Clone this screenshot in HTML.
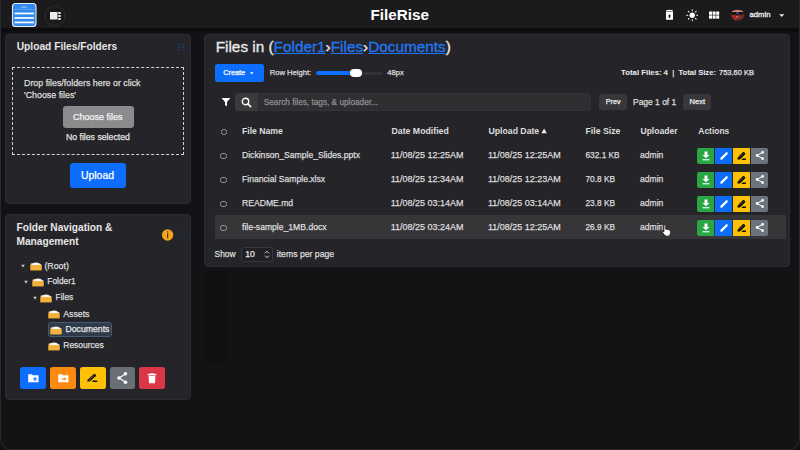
<!DOCTYPE html>
<html><head><meta charset="utf-8">
<style>
*{box-sizing:border-box;margin:0;padding:0}
html,body{width:800px;height:450px;overflow:hidden;background:#131215;font-family:"Liberation Sans",sans-serif;color:#e6e6e6;position:relative}
.a{position:absolute;white-space:nowrap}
.t{line-height:1;-webkit-text-stroke:0.25px currentColor}
.lk{color:#2176f0;text-decoration:underline;text-decoration-thickness:1px;text-underline-offset:1px}
#frame{position:absolute;left:0;top:0;width:800px;height:450px;border:1px solid #29282b;border-top:none;border-radius:0 0 12px 12px;pointer-events:none}
</style></head><body>
<div class="a" style="left:0px;top:0px;width:800px;height:28.3px;background:#1b1a1d;"></div>
<div class="a" style="left:0px;top:28.3px;width:800px;height:5.7px;background:linear-gradient(#0b0a0d 0%,#0c0b0e 45%,#161518 100%);"></div>
<svg class="a" style="left:11px;top:2px" width="27" height="26" viewBox="0 0 27 26">
<rect x="1.5" y="1.5" width="23.5" height="23" rx="3" fill="#3189ee" stroke="#e6ecf5" stroke-width="1.1"/>
<line x1="4" y1="7.3" x2="22.5" y2="7.3" stroke="#a8cbf5" stroke-width="0.7" stroke-dasharray="0.9 0.9"/>
<rect x="10" y="4.6" width="6" height="1" fill="#a8cbf5"/>
<rect x="3.5" y="10.6" width="19.5" height="1.7" fill="#fff"/>
<rect x="3.5" y="15.1" width="19.5" height="1.7" fill="#fff"/>
<rect x="3.5" y="19.6" width="19.5" height="1.7" fill="#fff"/>
</svg>
<svg class="a" style="left:44px;top:5px" width="22" height="22" viewBox="0 0 22 22">
<circle cx="11" cy="11" r="10" fill="#1a191c" stroke="#2e2d30" stroke-width="1"/>
<rect x="6" y="7" width="7.5" height="7.5" fill="#ececec"/>
<rect x="14.3" y="7" width="2.4" height="2" fill="#ececec"/>
<rect x="14.3" y="10" width="2.4" height="2" fill="#ececec"/>
<rect x="14.3" y="13" width="2.4" height="2" fill="#ececec"/>
</svg>
<div class="a t" style="left:370.50px;top:7.00px;font-size:15.26px;font-weight:bold;-webkit-text-stroke:0;color:#ffffff;">FileRise</div>
<svg class="a" style="left:664px;top:9px" width="11" height="12" viewBox="0 0 11 12">
<path d="M2.2 1.3 Q5.5 0.2 8.8 1.3 L9 2.4 H2 Z" fill="#fff"/>
<path d="M2 3 H9 V10.2 Q9 10.8 8.4 10.8 H2.6 Q2 10.8 2 10.2 Z" fill="#fff"/>
<path d="M5.5 5.2 L3.9 7.2 H4.8 V9 H6.2 V7.2 H7.1 Z" fill="#1b1a1d"/>
</svg>
<svg class="a" style="left:685.7px;top:9px" width="12.5" height="12.5" viewBox="0 0 16 16">
<circle cx="8" cy="8" r="3.4" fill="#fff"/>
<g stroke="#fff" stroke-width="1.3" stroke-linecap="round">
<line x1="8" y1="1" x2="8" y2="2.3"/><line x1="8" y1="13.7" x2="8" y2="15"/>
<line x1="1" y1="8" x2="2.3" y2="8"/><line x1="13.7" y1="8" x2="15" y2="8"/>
<line x1="3" y1="3" x2="3.9" y2="3.9"/><line x1="12.1" y1="12.1" x2="13" y2="13"/>
<line x1="3" y1="13" x2="3.9" y2="12.1"/><line x1="12.1" y1="3.9" x2="13" y2="3"/>
</g></svg>
<svg class="a" style="left:708px;top:11px" width="12" height="9" viewBox="0 0 12 9">
<g fill="#fff">
<rect x="1" y="0.5" width="3" height="3.3"/><rect x="4.6" y="0.5" width="3" height="3.3"/><rect x="8.2" y="0.5" width="3" height="3.3"/>
<rect x="1" y="4.4" width="3" height="3.3"/><rect x="4.6" y="4.4" width="3" height="3.3"/><rect x="8.2" y="4.4" width="3" height="3.3"/>
</g></svg>
<svg class="a" style="left:729.8px;top:9.3px" width="15" height="12" viewBox="0 0 16 13">
<ellipse cx="8" cy="6.5" rx="7.5" ry="6" fill="#6b2a22"/>
<path d="M2 2.5 Q8 -0.5 14 2.5 L14 3.5 H2 Z" fill="#c98a80"/>
<rect x="1.5" y="3.3" width="13" height="2.6" rx="1" fill="#111"/>
<rect x="6.5" y="3.5" width="3" height="1.8" fill="#2a4a8a"/>
<circle cx="4.5" cy="8" r="1.1" fill="#e02a2a"/><circle cx="10.5" cy="9" r="1.1" fill="#e02a2a"/>
<circle cx="7.5" cy="8.5" r="0.9" fill="#c9b0b0"/><circle cx="6" cy="10.5" r="1" fill="#e03a2a"/>
</svg>
<div class="a t" style="left:749.50px;top:11.00px;font-size:7.71px;color:#e8e8e8;-webkit-text-stroke:0.35px currentColor;">admin</div>
<svg class="a" style="left:778.8px;top:13.6px" width="5.5" height="3.2" viewBox="0 0 7 4"><path d="M0.3 0.3 H6.7 L3.5 3.7 Z" fill="#eee"/></svg>
<div class="a" style="left:5px;top:34px;width:186px;height:170px;background:#252428;border:1px solid #2c2b2f;border-radius:4px"></div>
<div class="a t" style="left:16.70px;top:42.00px;font-size:10.22px;font-weight:bold;-webkit-text-stroke:0;color:#e6e6e6;">Upload Files/Folders</div>
<svg class="a" style="left:177px;top:43px" width="8" height="8" viewBox="0 0 8 8"><g fill="#22395c">
<rect x="1" y="0.6" width="2.6" height="1.6"/><rect x="5" y="0.6" width="2.6" height="1.6"/>
<rect x="1" y="3.2" width="2.6" height="1.6"/><rect x="5" y="3.2" width="2.6" height="1.6"/>
<rect x="1" y="5.8" width="2.6" height="1.6"/><rect x="5" y="5.8" width="2.6" height="1.6"/></g></svg>
<div class="a" style="left:12px;top:67px;width:172px;height:88px;border:1.2px dashed #d4d4d4"></div>
<div class="a t" style="left:24.00px;top:79.00px;font-size:8.85px;color:#dddddd;">Drop files/folders here or click</div>
<div class="a t" style="left:24.00px;top:91.00px;font-size:8.85px;color:#dddddd;">'Choose files'</div>
<div class="a" style="left:62.5px;top:106.2px;width:71px;height:21.4px;background:#8b8a8d;border-radius:3px"></div>
<div class="a t" style="left:73.00px;top:113.00px;font-size:9.01px;color:#f4f4f4;">Choose files</div>
<div class="a t" style="left:65.90px;top:133.00px;font-size:8.72px;color:#e2e2e2;">No files selected</div>
<div class="a" style="left:69.5px;top:163px;width:56.7px;height:24.7px;background:#0d6efd;border-radius:3px"></div>
<div class="a t" style="left:81.00px;top:171.00px;font-size:10.41px;color:#ffffff;">Upload</div>
<div class="a" style="left:5px;top:214px;width:186px;height:185.5px;background:#252428;border:1px solid #2c2b2f;border-radius:4px"></div>
<div class="a t" style="left:16.50px;top:223.00px;font-size:10.16px;font-weight:bold;-webkit-text-stroke:0;color:#e6e6e6;">Folder Navigation &amp;</div>
<div class="a t" style="left:16.50px;top:237.00px;font-size:10.16px;font-weight:bold;-webkit-text-stroke:0;color:#e6e6e6;">Management</div>
<svg class="a" style="left:161px;top:229px" width="13" height="13" viewBox="0 0 13 13">
<circle cx="6.6" cy="6" r="5.7" fill="#f4a51f"/>
<rect x="6" y="2.2" width="1.2" height="1.3" fill="#5a3a10"/>
<rect x="6" y="4.3" width="1.2" height="5" fill="#5a3a10"/></svg>
<svg class="a" style="left:177px;top:231px" width="8" height="8" viewBox="0 0 8 8"><g fill="#1f2d40">
<rect x="1" y="0.6" width="2.6" height="1.4"/><rect x="5" y="0.6" width="2.6" height="1.4"/>
<rect x="1" y="3" width="2.6" height="1.4"/><rect x="5" y="3" width="2.6" height="1.4"/>
<rect x="1" y="5.4" width="2.6" height="1.4"/><rect x="5" y="5.4" width="2.6" height="1.4"/></g></svg>
<svg class="a" style="left:21.2px;top:263.8px" width="4" height="4" viewBox="0 0 4 4"><path d="M0.2 0.8 H3.8 L2 3.4 Z" fill="#d0d0d0"/></svg>
<svg class="a" style="left:29.9px;top:261.5px" width="12" height="9" viewBox="0 0 12 9">
<path d="M0.5 2.2 Q0.5 1.2 1.5 1.2 L4 1.2 L5 2 L10.5 2 Q11.5 2 11.5 3 L11.5 8.3 L0.5 8.3 Z" fill="#f2b13a"/>
<path d="M1.2 3.2 Q2 0.6 6 0.5 Q10 0.6 10.8 3.2 Z" fill="#f4f4f4"/>
<rect x="0.5" y="3.2" width="11" height="5.1" rx="0.6" fill="#f3b23b"/>
</svg>
<div class="a t" style="left:44.40px;top:262.00px;font-size:8.82px;color:#dedede;">(Root)</div>
<svg class="a" style="left:24.4px;top:279.6px" width="4" height="4" viewBox="0 0 4 4"><path d="M0.2 0.8 H3.8 L2 3.4 Z" fill="#d0d0d0"/></svg>
<svg class="a" style="left:32.4px;top:277.5px" width="12" height="9" viewBox="0 0 12 9">
<path d="M0.5 2.2 Q0.5 1.2 1.5 1.2 L4 1.2 L5 2 L10.5 2 Q11.5 2 11.5 3 L11.5 8.3 L0.5 8.3 Z" fill="#f2b13a"/>
<path d="M1.2 3.2 Q2 0.6 6 0.5 Q10 0.6 10.8 3.2 Z" fill="#f4f4f4"/>
<rect x="0.5" y="3.2" width="11" height="5.1" rx="0.6" fill="#f3b23b"/>
</svg>
<div class="a t" style="left:47.30px;top:277.00px;font-size:8.35px;color:#dedede;">Folder1</div>
<svg class="a" style="left:32.6px;top:295.6px" width="4" height="4" viewBox="0 0 4 4"><path d="M0.2 0.8 H3.8 L2 3.4 Z" fill="#d0d0d0"/></svg>
<svg class="a" style="left:40px;top:293.5px" width="12" height="9" viewBox="0 0 12 9">
<path d="M0.5 2.2 Q0.5 1.2 1.5 1.2 L4 1.2 L5 2 L10.5 2 Q11.5 2 11.5 3 L11.5 8.3 L0.5 8.3 Z" fill="#f2b13a"/>
<path d="M1.2 3.2 Q2 0.6 6 0.5 Q10 0.6 10.8 3.2 Z" fill="#f4f4f4"/>
<rect x="0.5" y="3.2" width="11" height="5.1" rx="0.6" fill="#f3b23b"/>
</svg>
<div class="a t" style="left:55.50px;top:293.00px;font-size:8.43px;color:#dedede;">Files</div>
<svg class="a" style="left:48.2px;top:309.6px" width="12" height="9" viewBox="0 0 12 9">
<path d="M0.5 2.2 Q0.5 1.2 1.5 1.2 L4 1.2 L5 2 L10.5 2 Q11.5 2 11.5 3 L11.5 8.3 L0.5 8.3 Z" fill="#f2b13a"/>
<path d="M1.2 3.2 Q2 0.6 6 0.5 Q10 0.6 10.8 3.2 Z" fill="#f4f4f4"/>
<rect x="0.5" y="3.2" width="11" height="5.1" rx="0.6" fill="#f3b23b"/>
</svg>
<div class="a t" style="left:63.30px;top:310.00px;font-size:8.73px;color:#dedede;">Assets</div>
<div class="a" style="left:47.6px;top:322px;width:64.4px;height:14.9px;background:#2f3a4a;border:1px solid #475a74;border-radius:3px"></div>
<svg class="a" style="left:50px;top:325.6px" width="12" height="9" viewBox="0 0 12 9">
<path d="M0.5 2.2 Q0.5 1.2 1.5 1.2 L4 1.2 L5 2 L10.5 2 Q11.5 2 11.5 3 L11.5 8.3 L0.5 8.3 Z" fill="#f2b13a"/>
<path d="M1.2 3.2 Q2 0.6 6 0.5 Q10 0.6 10.8 3.2 Z" fill="#f4f4f4"/>
<rect x="0.5" y="3.2" width="11" height="5.1" rx="0.6" fill="#f3b23b"/>
</svg>
<div class="a t" style="left:65.50px;top:325.00px;font-size:8.70px;color:#e8e8e8;">Documents</div>
<svg class="a" style="left:48.2px;top:341.6px" width="12" height="9" viewBox="0 0 12 9">
<path d="M0.5 2.2 Q0.5 1.2 1.5 1.2 L4 1.2 L5 2 L10.5 2 Q11.5 2 11.5 3 L11.5 8.3 L0.5 8.3 Z" fill="#f2b13a"/>
<path d="M1.2 3.2 Q2 0.6 6 0.5 Q10 0.6 10.8 3.2 Z" fill="#f4f4f4"/>
<rect x="0.5" y="3.2" width="11" height="5.1" rx="0.6" fill="#f3b23b"/>
</svg>
<div class="a t" style="left:63.30px;top:341.00px;font-size:8.47px;color:#dedede;">Resources</div>
<div class="a" style="left:20.4px;top:367.4px;width:25.6px;height:21.6px;background:#0d6efd;border-radius:2.8px"></div>
<div class="a" style="left:50px;top:367.4px;width:25.6px;height:21.6px;background:#fd8a10;border-radius:2.8px"></div>
<div class="a" style="left:80px;top:367.4px;width:25.6px;height:21.6px;background:#ffc107;border-radius:2.8px"></div>
<div class="a" style="left:109.6px;top:367.4px;width:25.6px;height:21.6px;background:#6a6e75;border-radius:2.8px"></div>
<div class="a" style="left:139.4px;top:367.4px;width:25.6px;height:21.6px;background:#dc3545;border-radius:2.8px"></div>
<svg class="a" style="left:28px;top:374.3px" width="11" height="8.5" viewBox="0 0 11 8.5">
<path d="M0.2 0.3 H3.8 L4.8 1.3 H10.5 V8.2 H0.2 Z" fill="#fff"/>
<circle cx="7" cy="5" r="1.7" fill="#0d6efd"/><path d="M6.3 5 H7.7 M7 4.3 V5.7" stroke="#fff" stroke-width="0.5"/></svg>
<svg class="a" style="left:57.7px;top:374.3px" width="11" height="8.5" viewBox="0 0 11 8.5">
<path d="M0.2 0.3 H3.8 L4.8 1.3 H10.5 V8.2 H0.2 Z" fill="#fff"/>
<path d="M6.3 3.2 L8.6 5 L6.3 6.8 Z" fill="#fd8a10"/><rect x="3.8" y="4.4" width="2.8" height="1.2" fill="#fd8a10"/></svg>
<svg class="a" style="left:86px;top:373px" width="12" height="10" viewBox="0 0 12 10">
<path d="M1.2 8.6 L1.8 6.6 L7.6 1.2 Q8.4 0.5 9.2 1.2 L9.6 1.6 Q10.3 2.4 9.6 3.2 L3.8 8.6 Z" fill="#111"/>
<path d="M3 7.2 L8 2.6" stroke="#c8950a" stroke-width="0.6"/>
<rect x="6.4" y="7.4" width="5" height="1.5" rx="0.5" fill="#111"/></svg>
<svg class="a" style="left:116px;top:371px" width="13" height="14" viewBox="0 0 13 14">
<g stroke="#fff" stroke-width="1.2"><line x1="3" y1="7" x2="9.5" y2="3"/><line x1="3" y1="7" x2="9.5" y2="11"/></g>
<circle cx="3" cy="7" r="1.8" fill="#fff"/><circle cx="9.5" cy="2.8" r="1.8" fill="#fff"/><circle cx="9.5" cy="11.2" r="1.8" fill="#fff"/></svg>
<svg class="a" style="left:146.5px;top:372.5px" width="10" height="11" viewBox="0 0 10 11">
<rect x="0.8" y="0.8" width="8.4" height="1.6" fill="#fff"/><rect x="3.5" y="0.2" width="3" height="1" fill="#fff"/>
<path d="M1.6 3 H8.4 L8 10.2 H2 Z" fill="#fff"/></svg>
<div class="a" style="left:204px;top:270.5px;width:23px;height:92px;background:#100f12;"></div>
<div class="a" style="left:204px;top:34px;width:586px;height:232.5px;background:#252428;border:1px solid #2c2b2f;border-radius:4px"></div>
<div class="a t" id="title" style="-webkit-text-stroke:0.35px currentColor;left:215.7px;top:39px;font-size:15.34px;color:#e8e8e8">Files in (<span class="lk">Folder1</span>›<span class="lk">Files</span>›<span class="lk">Documents</span>)</div>
<div class="a" style="left:214.7px;top:64px;width:49.3px;height:18px;background:#0d6efd;border-radius:2.5px"></div>
<div class="a t" style="left:223.20px;top:69.00px;font-size:7.33px;color:#ffffff;">Create</div>
<svg class="a" style="left:249.5px;top:72px" width="4" height="3" viewBox="0 0 4 3"><path d="M0 0.3 H3.6 L1.8 2.4 Z" fill="#fff"/></svg>
<div class="a t" style="left:269.70px;top:69.00px;font-size:7.64px;color:#dcdcdc;">Row Height:</div>
<div class="a" style="left:316.2px;top:71.5px;width:67px;height:3px;background:#323135;border-radius:2px"></div>
<div class="a" style="left:316.2px;top:71.1px;width:40px;height:3.8px;background:#0d6efd;border-radius:2px"></div>
<div class="a" style="left:349.8px;top:69.1px;width:12.1px;height:7.9px;background:#ffffff;border-radius:4px"></div>
<div class="a t" style="left:387.30px;top:69.00px;font-size:7.61px;color:#dcdcdc;">48px</div>
<div class="a t" style="left:621.00px;top:69.00px;font-size:7.80px;font-weight:bold;-webkit-text-stroke:0;color:#eeeeee;">Total Files:</div>
<div class="a t" style="left:663.60px;top:69.00px;font-size:8.00px;color:#e4e4e4;">4</div>
<div class="a t" style="left:672.20px;top:69.00px;font-size:8.00px;color:#e4e4e4;">|</div>
<div class="a t" style="left:678.40px;top:69.00px;font-size:7.63px;font-weight:bold;-webkit-text-stroke:0;color:#eeeeee;">Total Size:</div>
<div class="a t" style="left:719.00px;top:69.00px;font-size:7.49px;color:#e4e4e4;">753.60 KB</div>
<svg class="a" style="left:220.5px;top:97px" width="10" height="10" viewBox="0 0 10 10"><path d="M0.6 1 H9.4 L6 5 V9.2 L4 8 V5 Z" fill="#fff"/></svg>
<div class="a" style="left:235px;top:92.5px;width:355.5px;height:18.25px;background:#2f2e31;border-radius:3px;border:1px solid #333236"></div>
<div class="a" style="left:235px;top:92.5px;width:23px;height:18.25px;background:#3a393c;border-radius:3px 0 0 3px"></div>
<svg class="a" style="left:241px;top:96.5px" width="11" height="11" viewBox="0 0 11 11">
<circle cx="4.5" cy="4.5" r="3.2" fill="none" stroke="#fff" stroke-width="1.4"/>
<line x1="6.8" y1="6.8" x2="9.6" y2="9.6" stroke="#fff" stroke-width="1.6" stroke-linecap="round"/></svg>
<div class="a t" style="left:263.75px;top:99.00px;font-size:8.25px;color:#8e8d90;">Search files, tags, &amp; uploader...</div>
<div class="a" style="left:599.25px;top:93.75px;width:27.5px;height:16px;background:#38373b;border-radius:2px"></div>
<div class="a t" style="left:605.75px;top:99.00px;font-size:7.17px;color:#eeeeee;">Prev</div>
<div class="a t" style="left:633.00px;top:98.00px;font-size:8.46px;color:#dddddd;">Page 1 of 1</div>
<div class="a" style="left:683px;top:93.75px;width:28.25px;height:16px;background:#38373b;border-radius:2px"></div>
<div class="a t" style="left:689.50px;top:98.00px;font-size:7.54px;color:#eeeeee;">Next</div>
<div class="a" style="left:220.8px;top:128.8px;width:6.6px;height:6.6px;border:1.1px solid #9a9a9a;border-radius:2.6px"></div>
<div class="a t" style="left:242.00px;top:127.00px;font-size:8.64px;font-weight:bold;-webkit-text-stroke:0;color:#dedede;">File Name</div>
<div class="a t" style="left:391.50px;top:127.00px;font-size:8.74px;font-weight:bold;-webkit-text-stroke:0;color:#dedede;">Date Modified</div>
<div class="a t" style="left:488.50px;top:127.00px;font-size:8.70px;font-weight:bold;-webkit-text-stroke:0;color:#dedede;">Upload Date</div>
<svg class="a" style="left:540.8px;top:128.3px" width="6.5" height="5.8" viewBox="0 0 8 7"><path d="M0.5 6.3 L3.8 0.5 L7.2 6.3 Z" fill="#eee"/></svg>
<div class="a t" style="left:585.50px;top:127.00px;font-size:8.72px;font-weight:bold;-webkit-text-stroke:0;color:#dedede;">File Size</div>
<div class="a t" style="left:640.50px;top:127.00px;font-size:8.54px;font-weight:bold;-webkit-text-stroke:0;color:#dedede;">Uploader</div>
<div class="a t" style="left:698.30px;top:127.00px;font-size:8.45px;font-weight:bold;-webkit-text-stroke:0;color:#dedede;">Actions</div>
<div class="a" style="left:214.8px;top:215.2px;width:571.5px;height:24.2px;background:#363538;"></div>
<div class="a" style="left:220px;top:152.8px;width:6.6px;height:6.6px;border:1.1px solid #9a9a9a;border-radius:2.6px"></div>
<div class="a t" style="left:242.00px;top:151.00px;font-size:8.60px;color:#dcdcdc;">Dickinson_Sample_Slides.pptx</div>
<div class="a t" style="left:390.70px;top:151.00px;font-size:8.99px;color:#dcdcdc;">11/08/25 12:25AM</div>
<div class="a t" style="left:488.00px;top:151.00px;font-size:8.99px;color:#dcdcdc;">11/08/25 12:25AM</div>
<div class="a t" style="left:585.50px;top:151.00px;font-size:8.30px;color:#dcdcdc;">632.1 KB</div>
<div class="a t" style="left:640.00px;top:151.00px;font-size:8.56px;color:#dcdcdc;">admin</div>
<div class="a" style="left:696.9px;top:147.9px;width:17.6px;height:16.2px;background:#28a745;border-radius:2px 0 0 2px"></div>
<div class="a" style="left:714.8px;top:147.9px;width:17.6px;height:16.2px;background:#0d6efd;"></div>
<div class="a" style="left:732.9px;top:147.9px;width:17.6px;height:16.2px;background:#ffc107;"></div>
<div class="a" style="left:750.8px;top:147.9px;width:17.2px;height:16.2px;background:#6c757d;border-radius:0 2px 2px 0"></div>
<svg class="a" style="left:700.5px;top:150.9px" width="10" height="10" viewBox="0 0 10 10">
<path d="M3.5 0.5 H6.5 V4 H8.5 L5 7.3 L1.5 4 H3.5 Z" fill="#fff"/><rect x="1.5" y="8.2" width="7" height="1.1" fill="#fff"/></svg>
<svg class="a" style="left:718.5px;top:150.9px" width="10" height="10" viewBox="0 0 10 10">
<path d="M1.2 8.8 L1.6 6.8 L7 1.4 Q7.6 0.8 8.2 1.4 L8.6 1.8 Q9.2 2.4 8.6 3 L3.2 8.4 Z" fill="#fff"/></svg>
<svg class="a" style="left:735.5px;top:150.9px" width="11" height="10" viewBox="0 0 11 10">
<path d="M1.3 8.6 L1.8 6.2 L6.8 1.2 Q7.5 0.5 8.2 1.2 L9 2 Q9.7 2.7 9 3.4 L4 8.4 Z" fill="#111"/>
<path d="M2.8 6.8 L7.3 2.3" stroke="#8a6a10" stroke-width="0.5"/>
<rect x="6" y="7.6" width="4" height="1.4" rx="0.5" fill="#111"/></svg>
<svg class="a" style="left:754.5px;top:150.4px" width="10" height="11" viewBox="0 0 10 11">
<g stroke="#fff" stroke-width="1"><line x1="2.2" y1="5.5" x2="7.6" y2="2.2"/><line x1="2.2" y1="5.5" x2="7.6" y2="8.8"/></g>
<circle cx="2.2" cy="5.5" r="1.4" fill="#fff"/><circle cx="7.6" cy="2.4" r="1.35" fill="#fff"/><circle cx="7.6" cy="8.6" r="1.35" fill="#fff"/></svg>
<div class="a" style="left:220px;top:176.8px;width:6.6px;height:6.6px;border:1.1px solid #9a9a9a;border-radius:2.6px"></div>
<div class="a t" style="left:242.00px;top:175.00px;font-size:8.60px;color:#dcdcdc;">Financial Sample.xlsx</div>
<div class="a t" style="left:390.70px;top:175.00px;font-size:8.99px;color:#dcdcdc;">11/08/25 12:34AM</div>
<div class="a t" style="left:488.00px;top:175.00px;font-size:8.99px;color:#dcdcdc;">11/08/25 12:23AM</div>
<div class="a t" style="left:585.50px;top:175.00px;font-size:8.30px;color:#dcdcdc;">70.8 KB</div>
<div class="a t" style="left:640.00px;top:175.00px;font-size:8.56px;color:#dcdcdc;">admin</div>
<div class="a" style="left:696.9px;top:171.9px;width:17.6px;height:16.2px;background:#28a745;border-radius:2px 0 0 2px"></div>
<div class="a" style="left:714.8px;top:171.9px;width:17.6px;height:16.2px;background:#0d6efd;"></div>
<div class="a" style="left:732.9px;top:171.9px;width:17.6px;height:16.2px;background:#ffc107;"></div>
<div class="a" style="left:750.8px;top:171.9px;width:17.2px;height:16.2px;background:#6c757d;border-radius:0 2px 2px 0"></div>
<svg class="a" style="left:700.5px;top:174.9px" width="10" height="10" viewBox="0 0 10 10">
<path d="M3.5 0.5 H6.5 V4 H8.5 L5 7.3 L1.5 4 H3.5 Z" fill="#fff"/><rect x="1.5" y="8.2" width="7" height="1.1" fill="#fff"/></svg>
<svg class="a" style="left:718.5px;top:174.9px" width="10" height="10" viewBox="0 0 10 10">
<path d="M1.2 8.8 L1.6 6.8 L7 1.4 Q7.6 0.8 8.2 1.4 L8.6 1.8 Q9.2 2.4 8.6 3 L3.2 8.4 Z" fill="#fff"/></svg>
<svg class="a" style="left:735.5px;top:174.9px" width="11" height="10" viewBox="0 0 11 10">
<path d="M1.3 8.6 L1.8 6.2 L6.8 1.2 Q7.5 0.5 8.2 1.2 L9 2 Q9.7 2.7 9 3.4 L4 8.4 Z" fill="#111"/>
<path d="M2.8 6.8 L7.3 2.3" stroke="#8a6a10" stroke-width="0.5"/>
<rect x="6" y="7.6" width="4" height="1.4" rx="0.5" fill="#111"/></svg>
<svg class="a" style="left:754.5px;top:174.4px" width="10" height="11" viewBox="0 0 10 11">
<g stroke="#fff" stroke-width="1"><line x1="2.2" y1="5.5" x2="7.6" y2="2.2"/><line x1="2.2" y1="5.5" x2="7.6" y2="8.8"/></g>
<circle cx="2.2" cy="5.5" r="1.4" fill="#fff"/><circle cx="7.6" cy="2.4" r="1.35" fill="#fff"/><circle cx="7.6" cy="8.6" r="1.35" fill="#fff"/></svg>
<div class="a" style="left:220px;top:200.8px;width:6.6px;height:6.6px;border:1.1px solid #9a9a9a;border-radius:2.6px"></div>
<div class="a t" style="left:242.00px;top:199.00px;font-size:8.60px;color:#dcdcdc;">README.md</div>
<div class="a t" style="left:390.70px;top:199.00px;font-size:8.99px;color:#dcdcdc;">11/08/25 03:14AM</div>
<div class="a t" style="left:488.00px;top:199.00px;font-size:8.99px;color:#dcdcdc;">11/08/25 03:14AM</div>
<div class="a t" style="left:585.50px;top:199.00px;font-size:8.30px;color:#dcdcdc;">23.8 KB</div>
<div class="a t" style="left:640.00px;top:199.00px;font-size:8.56px;color:#dcdcdc;">admin</div>
<div class="a" style="left:696.9px;top:195.9px;width:17.6px;height:16.2px;background:#28a745;border-radius:2px 0 0 2px"></div>
<div class="a" style="left:714.8px;top:195.9px;width:17.6px;height:16.2px;background:#0d6efd;"></div>
<div class="a" style="left:732.9px;top:195.9px;width:17.6px;height:16.2px;background:#ffc107;"></div>
<div class="a" style="left:750.8px;top:195.9px;width:17.2px;height:16.2px;background:#6c757d;border-radius:0 2px 2px 0"></div>
<svg class="a" style="left:700.5px;top:198.9px" width="10" height="10" viewBox="0 0 10 10">
<path d="M3.5 0.5 H6.5 V4 H8.5 L5 7.3 L1.5 4 H3.5 Z" fill="#fff"/><rect x="1.5" y="8.2" width="7" height="1.1" fill="#fff"/></svg>
<svg class="a" style="left:718.5px;top:198.9px" width="10" height="10" viewBox="0 0 10 10">
<path d="M1.2 8.8 L1.6 6.8 L7 1.4 Q7.6 0.8 8.2 1.4 L8.6 1.8 Q9.2 2.4 8.6 3 L3.2 8.4 Z" fill="#fff"/></svg>
<svg class="a" style="left:735.5px;top:198.9px" width="11" height="10" viewBox="0 0 11 10">
<path d="M1.3 8.6 L1.8 6.2 L6.8 1.2 Q7.5 0.5 8.2 1.2 L9 2 Q9.7 2.7 9 3.4 L4 8.4 Z" fill="#111"/>
<path d="M2.8 6.8 L7.3 2.3" stroke="#8a6a10" stroke-width="0.5"/>
<rect x="6" y="7.6" width="4" height="1.4" rx="0.5" fill="#111"/></svg>
<svg class="a" style="left:754.5px;top:198.4px" width="10" height="11" viewBox="0 0 10 11">
<g stroke="#fff" stroke-width="1"><line x1="2.2" y1="5.5" x2="7.6" y2="2.2"/><line x1="2.2" y1="5.5" x2="7.6" y2="8.8"/></g>
<circle cx="2.2" cy="5.5" r="1.4" fill="#fff"/><circle cx="7.6" cy="2.4" r="1.35" fill="#fff"/><circle cx="7.6" cy="8.6" r="1.35" fill="#fff"/></svg>
<div class="a" style="left:220px;top:224.8px;width:6.6px;height:6.6px;border:1.1px solid #9a9a9a;border-radius:2.6px"></div>
<div class="a t" style="left:242.00px;top:223.00px;font-size:8.60px;color:#dcdcdc;">file-sample_1MB.docx</div>
<div class="a t" style="left:390.70px;top:223.00px;font-size:8.99px;color:#dcdcdc;">11/08/25 03:24AM</div>
<div class="a t" style="left:488.00px;top:223.00px;font-size:8.99px;color:#dcdcdc;">11/08/25 12:25AM</div>
<div class="a t" style="left:585.50px;top:223.00px;font-size:8.30px;color:#dcdcdc;">26.9 KB</div>
<div class="a t" style="left:640.00px;top:223.00px;font-size:8.56px;color:#dcdcdc;">admin</div>
<div class="a" style="left:696.9px;top:219.9px;width:17.6px;height:16.2px;background:#28a745;border-radius:2px 0 0 2px"></div>
<div class="a" style="left:714.8px;top:219.9px;width:17.6px;height:16.2px;background:#0d6efd;"></div>
<div class="a" style="left:732.9px;top:219.9px;width:17.6px;height:16.2px;background:#ffc107;"></div>
<div class="a" style="left:750.8px;top:219.9px;width:17.2px;height:16.2px;background:#6c757d;border-radius:0 2px 2px 0"></div>
<svg class="a" style="left:700.5px;top:222.9px" width="10" height="10" viewBox="0 0 10 10">
<path d="M3.5 0.5 H6.5 V4 H8.5 L5 7.3 L1.5 4 H3.5 Z" fill="#fff"/><rect x="1.5" y="8.2" width="7" height="1.1" fill="#fff"/></svg>
<svg class="a" style="left:718.5px;top:222.9px" width="10" height="10" viewBox="0 0 10 10">
<path d="M1.2 8.8 L1.6 6.8 L7 1.4 Q7.6 0.8 8.2 1.4 L8.6 1.8 Q9.2 2.4 8.6 3 L3.2 8.4 Z" fill="#fff"/></svg>
<svg class="a" style="left:735.5px;top:222.9px" width="11" height="10" viewBox="0 0 11 10">
<path d="M1.3 8.6 L1.8 6.2 L6.8 1.2 Q7.5 0.5 8.2 1.2 L9 2 Q9.7 2.7 9 3.4 L4 8.4 Z" fill="#111"/>
<path d="M2.8 6.8 L7.3 2.3" stroke="#8a6a10" stroke-width="0.5"/>
<rect x="6" y="7.6" width="4" height="1.4" rx="0.5" fill="#111"/></svg>
<svg class="a" style="left:754.5px;top:222.4px" width="10" height="11" viewBox="0 0 10 11">
<g stroke="#fff" stroke-width="1"><line x1="2.2" y1="5.5" x2="7.6" y2="2.2"/><line x1="2.2" y1="5.5" x2="7.6" y2="8.8"/></g>
<circle cx="2.2" cy="5.5" r="1.4" fill="#fff"/><circle cx="7.6" cy="2.4" r="1.35" fill="#fff"/><circle cx="7.6" cy="8.6" r="1.35" fill="#fff"/></svg>
<svg class="a" style="left:660.5px;top:224px" width="11" height="13" viewBox="0 0 11 13">
<path d="M3 1.2 Q3.9 0.5 4.7 1.2 V5.2 Q6.5 5 8.5 6 Q9.8 6.8 9.6 8.5 Q9.4 11 7.6 11.9 Q5.6 12.6 4 11.6 L1.6 8.6 Q1.1 7.6 2 7.3 L3 7.8 Z" fill="#fff" stroke="#111" stroke-width="0.7"/></svg>
<div class="a t" style="left:214.60px;top:250.00px;font-size:8.40px;color:#dcdcdc;">Show</div>
<div class="a" style="left:240.5px;top:247.25px;width:32.4px;height:14.55px;background:#212024;border:1px solid #38373b;border-radius:3px"></div>
<div class="a t" style="left:245.25px;top:250.00px;font-size:8.68px;color:#e4e4e4;">10</div>
<svg class="a" style="left:263.5px;top:250px" width="6" height="9" viewBox="0 0 6 9"><path d="M1 3.3 L3 1.3 L5 3.3 M1 5.7 L3 7.7 L5 5.7" fill="none" stroke="#ddd" stroke-width="1"/></svg>
<div class="a t" style="left:276.75px;top:250.00px;font-size:8.68px;color:#dcdcdc;">items per page</div>
<div id="frame"></div>
</body></html>
